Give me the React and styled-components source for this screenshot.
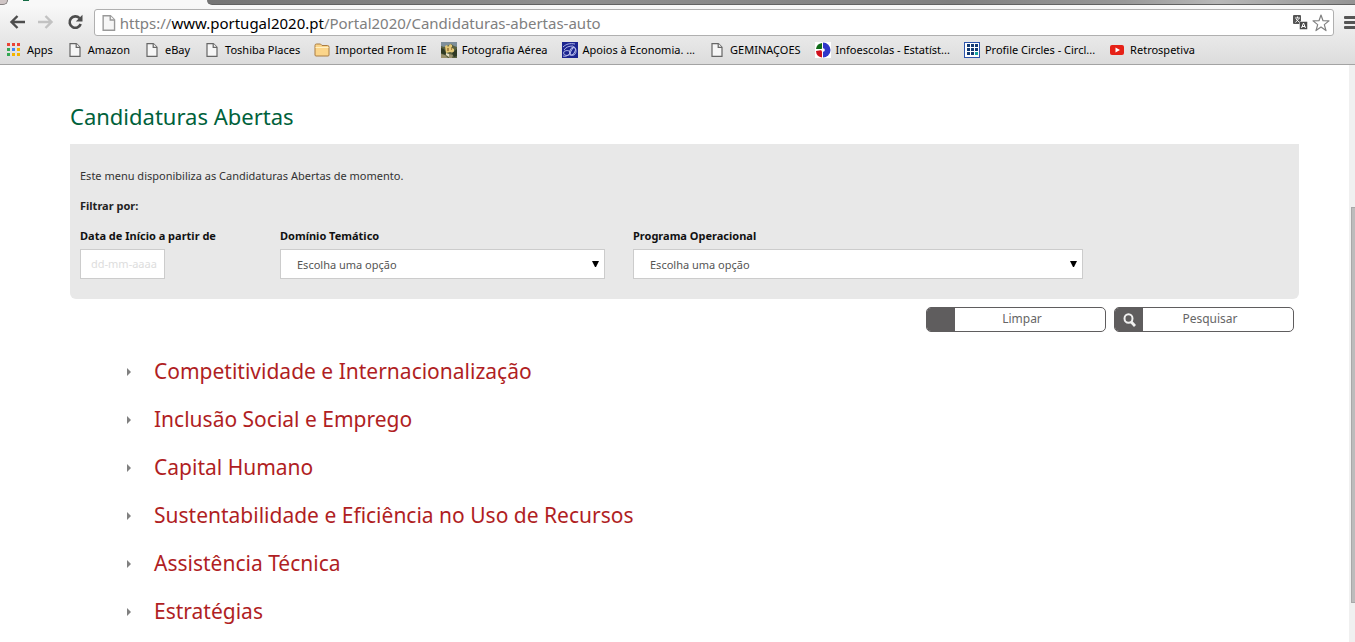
import React, { useState } from 'react'
import styled, { createGlobalStyle } from 'styled-components'

const GlobalStyle = createGlobalStyle`
  * {
    box-sizing: border-box;
  }

  html, body {
    margin: 0;
    background: #ffffff;
  }

  body {
    font-family: 'Noto Sans', 'Open Sans', sans-serif;
    font-size: 11px;
    color: #333333;
    overflow: hidden;
  }

  h1, h2, p, ul, form {
    margin: 0;
    padding: 0;
  }

  button, input, select {
    font-family: inherit;
  }
`

const Window = styled.div`
  display: flex;
  flex-direction: column;
  height: 100vh;
`

const TabStrip = styled.div`
  display: flex;
  justify-content: space-between;
  height: 5px;
  flex: none;
  background: #f8f8f8;
`

const PreviousTab = styled.div`
  width: 8px;
  background: #cfc5c5;
  border-right: 1px solid #858080;
  border-bottom: 1px solid #858080;
  border-bottom-right-radius: 5px;
`

const ActiveTab = styled.div`
  width: 199px;
  padding-left: 15px;
`

const Favicon = styled.div`
  width: 6px;
  height: 1px;
  background: #146b45;
`

const TabSpace = styled.div`
  flex: 1;
  background: linear-gradient(to right, #747474, #8f8f8f 30%, #808080 65%, #999999 80%, #b8b8b8 88%, #949494);
  border-bottom: 1px solid #626262;
  border-bottom-left-radius: 5px;
`

const Toolbar = styled.div`
  display: flex;
  align-items: center;
  flex: none;
  height: 31px;
  gap: 10px;
  padding-left: 9px;
  background: linear-gradient(#f8f8f8, #e9e9e9);
  overflow: hidden;
`

const IconButton = styled.button`
  display: flex;
  flex: none;
  border: 0;
  padding: 0;
  background: none;
  cursor: pointer;
`

const NavButtons = styled.div`
  display: flex;
  align-items: center;
  gap: 13px;
  flex: none;
  padding-top: 3px;
`

const AddressBar = styled.div`
  display: flex;
  align-items: center;
  flex: 1;
  gap: 4px;
  height: 27px;
  margin-top: 4px;
  padding: 0 3px 0 7px;
  background: #ffffff;
  border: 1px solid #b0b0b0;
  border-radius: 3px;
`

const Url = styled.div`
  flex: 1;
  font-family: 'Noto Sans', sans-serif;
  font-size: 15px;
  line-height: 24px;
  color: #808080;
  white-space: nowrap;
`

const Host = styled.span`
  color: #000000;
`

const MenuButton = styled(IconButton)`
  width: 11px;
  padding-top: 3px;
  overflow: hidden;
`

const Bookmarks = styled.nav`
  display: flex;
  align-items: center;
  flex: none;
  height: 29px;
  gap: 14px;
  padding: 0 6px;
  background: linear-gradient(#e9e9e9, #dcdcdc);
  border-bottom: 1px solid #a3a3a3;
`

const Bookmark = styled.a`
  display: flex;
  align-items: center;
  gap: 5px;
  font-family: 'Noto Sans', sans-serif;
  font-size: 11px;
  line-height: 16px;
  color: #000000;
  text-decoration: none;
  white-space: nowrap;
`

const BookmarkIcon = styled.span`
  display: flex;
  justify-content: center;
  align-items: center;
  flex: none;
  width: 16px;
  height: 16px;
`

const Viewport = styled.div`
  display: flex;
  flex: 1;
  min-height: 0;
`

const Page = styled.main`
  flex: 1;
  min-width: 0;
  padding: 36px 50px 0 70px;
  overflow: hidden;
`

const ScrollTrack = styled.div`
  flex: none;
  width: 6px;
  padding: 142px 0 39px 2px;
  background: #f0f0f0;
`

const ScrollThumb = styled.div`
  height: 100%;
  background: #bcbcbc;
  border: 1px solid #a8a8a8;
  border-right: 0;
`

const Title = styled.h1`
  font-size: 22px;
  line-height: 30px;
  font-weight: 400;
  color: #00613b;
`

const FilterPanel = styled.div`
  margin-top: 13px;
  padding: 22px 10px 20px;
  background: #e8e8e8;
  border-radius: 0 0 6px 6px;
  line-height: 20px;
`

const Strong = styled.p`
  margin-top: 10px;
  font-weight: 700;
  color: #222222;
`

const Fields = styled.div`
  display: flex;
  margin-top: 10px;
`

const Field = styled.div`
  display: flex;
  flex-direction: column;
  align-items: flex-start;
  gap: 3px;
  flex: 0 1 ${(props) => props.$basis};
`

const Label = styled.label`
  font-weight: 700;
  color: #111111;
`

const DateInput = styled.input`
  width: 85px;
  height: 30px;
  padding: 0 0 2px 10px;
  font-size: 11px;
  color: #555555;
  background: #ffffff;
  border: 1px solid #cccccc;

  &::placeholder {
    color: #dddddd;
    opacity: 1;
  }
`

const SelectBox = styled.div`
  position: relative;
  width: ${(props) => props.$width};

  & > svg {
    position: absolute;
    right: 6px;
    top: 12px;
    pointer-events: none;
  }
`

const Select = styled.select`
  display: block;
  width: 100%;
  height: 30px;
  padding: 0 16px;
  font-size: 11px;
  color: #555555;
  background: #ffffff;
  border: 1px solid #cccccc;
  border-radius: 0;
  appearance: none;
`

const Actions = styled.div`
  display: flex;
  justify-content: flex-end;
  gap: 8px;
  padding: 8px 5px 0 0;
`

const ActionButton = styled.button`
  display: flex;
  width: 180px;
  height: 25px;
  padding: 0;
  font-size: 12px;
  line-height: 22px;
  color: #666666;
  background: #ffffff;
  border: 1px solid #5f5d5e;
  border-radius: 5px;
  overflow: hidden;
  cursor: pointer;
`

const ActionIcon = styled.span`
  display: flex;
  align-items: center;
  justify-content: center;
  width: 28px;
  height: 100%;
  background: #5f5d5e;
`

const ActionText = styled.span`
  flex: 1;
  padding-right: 16px;
`

const Domains = styled.ul`
  margin-top: 15px;
  padding-left: 56px;
  list-style: none;
`

const Domain = styled.li`
  height: 48px;
`

const DomainLink = styled.a`
  display: flex;
  align-items: center;
  gap: 23px;
  font-size: 21px;
  line-height: 48px;
  color: #b01e23;
  text-decoration: none;
`

const BackIcon = () => (
  <svg width="16" height="16" viewBox="0 0 16 16" fill="none" stroke="#4d4d4d" strokeWidth="2.4">
    <path d="M16 8H3M8.5 2 2.500 8l6 6" />
  </svg>
)

const ForwardIcon = () => (
  <svg width="16" height="16" viewBox="0 0 16 16" fill="none" stroke="#c2c2c2" strokeWidth="2.4">
    <path d="M0 8h13M7.500 2l6 6-6 6" />
  </svg>
)

const ReloadIcon = () => (
  <svg width="17" height="16" viewBox="0 0 17 16">
    <path d="M12.500 4.200A5.700 5.700 0 1 0 13.700 10" fill="none" stroke="#4d4d4d" strokeWidth="2.6" />
    <path d="M15.500.8v6.700H8.800z" fill="#4d4d4d" />
  </svg>
)

const PageIcon = ({ color = '#666666', size = 14 }) => (
  <svg width={(size * 6) / 7} height={size} viewBox="0 0 12 14" fill="#f6f6f6" stroke={color} strokeWidth="1.2">
    <path d="M1 .6h6.400L11 4.200v9.200H1z" />
    <path d="M7.200.6v3.800H11" />
  </svg>
)

const FolderIcon = () => (
  <svg width="16" height="14" viewBox="0 0 16 14">
    <path d="M1 12V2.500Q1 1 2.500 1h4L8 2.500h5.500Q15 2.500 15 4v8q0 1-1 1H2q-1 0-1-1z" fill="#fbd58a" stroke="#a97c43" />
    <path d="M1.500 4.500h13" stroke="#fff0c4" />
  </svg>
)

const AppsIcon = () => {
  const colors = ['#ea4335', '#ea4335', '#ea4335', '#34a853', '#4285f4', '#f4b400', '#34a853', '#f4b400', '#f4b400']
  return (
    <svg width="14" height="14">
      {colors.map((color, i) => (
        <rect key={i} x={(i % 3) * 5} y={Math.floor(i / 3) * 5} width="3" height="3" fill={color} />
      ))}
    </svg>
  )
}

const PhotoIcon = () => (
  <svg width="16" height="16">
    <rect width="16" height="16" fill="#59603f" />
    <path d="M0 0h16v5l-3-1-3-2-4 2-3 1-3-1z" fill="#7e8f9a" />
    <path d="M4 4l2-1 1 2 2-3 2 1v3l2 1v4l-4-1-4 1z" fill="#e3c876" />
    <path d="M6 6h2v3H6zM10 5h1v3h-1z" fill="#a98545" />
    <path d="M0 6l3 1 2 4-1 2-4-2zM11 11l5-4v7l-3 1z" fill="#2f3a24" />
    <path d="M0 12l4 1 3 3H0zM8 12l4 1-1 3H8z" fill="#99906c" />
    <path d="M5 11l3 1v3l-3-2z" fill="#e5dfc4" />
  </svg>
)

const EconomiaIcon = () => (
  <svg width="16" height="16" fill="none" stroke="#bcc2ee" strokeWidth=".9">
    <rect width="16" height="16" fill="#1c2590" stroke="none" />
    <path d="M1 5c3-3 7-4 12-3M2 8c2-3 5-4 9-4M1 14c2 1 5 0 7-3l4-7" />
    <ellipse cx="5" cy="11" rx="3.500" ry="2.500" />
    <ellipse cx="10.500" cy="9" rx="2.500" ry="4" transform="rotate(25 10.500 9)" />
    <path d="M8 13c3 1 6 0 6-4s-3-4-4-2" />
  </svg>
)

const InfoIcon = () => (
  <svg width="16" height="16">
    <rect width="16" height="16" fill="#ffffff" />
    <path d="M8 .5a7.500 7.500 0 0 1 0 15z" fill="#3036c9" />
    <path d="M7 1v6H1A7 7 0 0 1 7 1z" fill="#106b18" />
    <path d="M1 9l6-1v7.500A7 7 0 0 1 1 9z" fill="#d0101c" />
    <circle cx="8" cy="8" r="1.800" fill="#ffffff" />
  </svg>
)

const GridIcon = () => (
  <svg width="16" height="16">
    <rect x=".5" y=".5" width="15" height="15" fill="#ffffff" stroke="#2d55ad" />
    {[0, 1, 2].map((row) =>
      [0, 1, 2].map((col) => (
        <rect
          key={`${row}${col}`}
          x={3 + col * 4}
          y={2 + row * 4}
          width="3"
          height="3"
          fill={row + col === 4 ? '#16a6a0' : '#133a73'}
        />
      ))
    )}
  </svg>
)

const VideoIcon = () => (
  <svg width="14" height="10">
    <rect width="14" height="10" rx="2" fill="#e62117" />
    <path d="M5.500 2.500 10 5 5.500 7.500z" fill="#ffffff" />
  </svg>
)

const TranslateIcon = () => (
  <svg width="15" height="15" fill="none">
    <rect x="0" y="0" width="8" height="9" rx="1" fill="#555555" />
    <path d="M2 3h5M4.500 1.500V3M6 3.500 2.500 7.500M3 4l3.500 3.500" stroke="#ffffff" strokeWidth=".9" />
    <rect x="6.500" y="6.500" width="8" height="8" rx="1" fill="#4a4a4a" stroke="#ffffff" strokeWidth=".5" />
    <path d="M8.500 13 10.500 8l2 5M9 11.500h3" stroke="#ffffff" />
  </svg>
)

const StarIcon = () => (
  <svg width="18" height="18" viewBox="0 0 18 18" fill="#ffffff" stroke="#808080" strokeWidth="1.2">
    <path d="M9 1l2 5.700 6 .2-4.700 3.700 1.700 6L9 13.100 4 16.600l1.700-6L1 6.900l6-.2z" strokeLinejoin="round" />
  </svg>
)

const MenuIcon = () => (
  <svg width="16" height="13" fill="#555555">
    <rect y="0" width="16" height="3" rx="1" />
    <rect y="5" width="16" height="3" rx="1" />
    <rect y="10" width="16" height="3" rx="1" />
  </svg>
)

const SearchIcon = () => (
  <svg width="13" height="14" viewBox="0 0 13 14" fill="none" stroke="#f0f0f0">
    <ellipse cx="5.500" cy="5.500" rx="4" ry="4.300" strokeWidth="2" />
    <path d="M8.300 9 12 13" strokeWidth="2.8" />
  </svg>
)

const DropArrow = () => (
  <svg width="7" height="6" fill="#000000">
    <path d="M0 0h7L4 6H3z" />
  </svg>
)

const Caret = () => (
  <svg width="5" height="10" fill="#808080">
    <path d="M1 2 5 6 1 10z" />
  </svg>
)

const bookmarks = [
  { label: 'Apps', icon: <AppsIcon /> },
  { label: 'Amazon', icon: <PageIcon /> },
  { label: 'eBay', icon: <PageIcon /> },
  { label: 'Toshiba Places', icon: <PageIcon /> },
  { label: 'Imported From IE', icon: <FolderIcon /> },
  { label: 'Fotografia Aérea', icon: <PhotoIcon /> },
  { label: 'Apoios à Economia. ...', icon: <EconomiaIcon /> },
  { label: 'GEMINAÇOES', icon: <PageIcon /> },
  { label: 'Infoescolas - Estatíst...', icon: <InfoIcon /> },
  { label: 'Profile Circles - Circl...', icon: <GridIcon /> },
  { label: 'Retrospetiva', icon: <VideoIcon /> },
]

const domains = [
  'Competitividade e Internacionalização',
  'Inclusão Social e Emprego',
  'Capital Humano',
  'Sustentabilidade e Eficiência no Uso de Recursos',
  'Assistência Técnica',
  'Estratégias',
]

const SelectField = ({ id, label, basis, width }) => (
  <Field $basis={basis}>
    <Label htmlFor={id}>{label}</Label>
    <SelectBox $width={width}>
      <Select id={id}>
        <option>Escolha uma opção</option>
      </Select>
      <DropArrow />
    </SelectBox>
  </Field>
)

const Browser = () => (
  <>
    <TabStrip>
      <PreviousTab />
      <ActiveTab>
        <Favicon />
      </ActiveTab>
      <TabSpace />
    </TabStrip>
    <Toolbar>
      <NavButtons>
        <IconButton aria-label="Back">
          <BackIcon />
        </IconButton>
        <IconButton aria-label="Forward">
          <ForwardIcon />
        </IconButton>
        <IconButton aria-label="Reload">
          <ReloadIcon />
        </IconButton>
      </NavButtons>
      <AddressBar>
        <PageIcon color="#999999" size={16} />
        <Url>
          https://<Host>www.portugal2020.pt</Host>/Portal2020/Candidaturas-abertas-auto
        </Url>
        <IconButton aria-label="Translate">
          <TranslateIcon />
        </IconButton>
        <IconButton aria-label="Bookmark">
          <StarIcon />
        </IconButton>
      </AddressBar>
      <MenuButton aria-label="Menu">
        <MenuIcon />
      </MenuButton>
    </Toolbar>
    <Bookmarks>
      {bookmarks.map(({ label, icon }) => (
        <Bookmark key={label} href="#">
          <BookmarkIcon>{icon}</BookmarkIcon>
          {label}
        </Bookmark>
      ))}
    </Bookmarks>
  </>
)

const App = () => {
  const [date, setDate] = useState('')

  return (
    <Window>
      <GlobalStyle />
      <Browser />
      <Viewport>
        <Page>
          <Title>Candidaturas Abertas</Title>
          <form onSubmit={(e) => e.preventDefault()}>
            <FilterPanel>
              <p>Este menu disponibiliza as Candidaturas Abertas de momento.</p>
              <Strong>Filtrar por:</Strong>
              <Fields>
                <Field $basis="200px">
                  <Label htmlFor="start">Data de Início a partir de</Label>
                  <DateInput
                    id="start"
                    placeholder="dd-mm-aaaa"
                    value={date}
                    onChange={(e) => setDate(e.target.value)}
                  />
                </Field>
                <SelectField id="domain" label="Domínio Temático" basis="353px" width="325px" />
                <SelectField id="program" label="Programa Operacional" basis="450px" width="450px" />
              </Fields>
            </FilterPanel>
            <Actions>
              <ActionButton type="reset" onClick={() => setDate('')}>
                <ActionIcon />
                <ActionText>Limpar</ActionText>
              </ActionButton>
              <ActionButton type="submit">
                <ActionIcon>
                  <SearchIcon />
                </ActionIcon>
                <ActionText>Pesquisar</ActionText>
              </ActionButton>
            </Actions>
          </form>
          <Domains>
            {domains.map((domain) => (
              <Domain key={domain}>
                <DomainLink href="#">
                  <Caret />
                  {domain}
                </DomainLink>
              </Domain>
            ))}
          </Domains>
        </Page>
        <ScrollTrack>
          <ScrollThumb />
        </ScrollTrack>
      </Viewport>
    </Window>
  )
}

export default App
